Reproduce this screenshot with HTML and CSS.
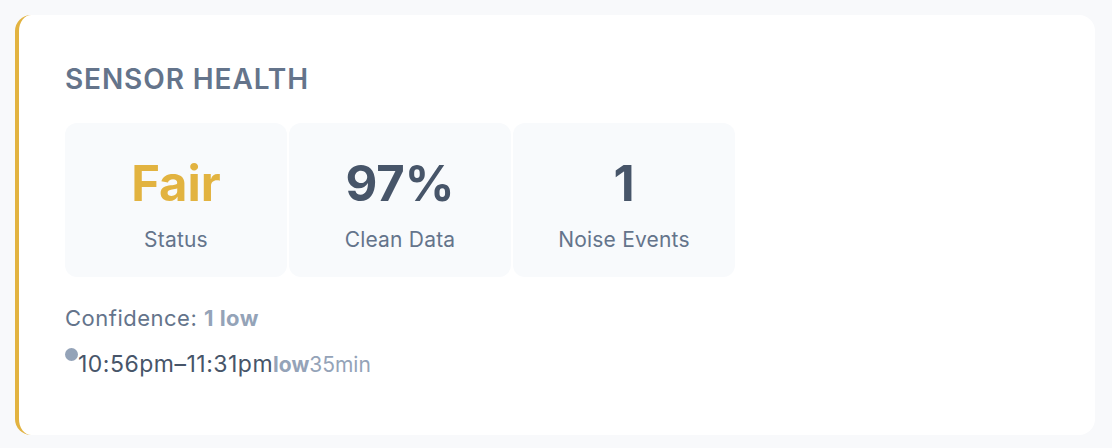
FILE: index.html
```html
<!DOCTYPE html>
<html>
<head>
<meta charset="utf-8">
<link rel="stylesheet" href="styles.css">
</head>
<body>
<div class="card">
  <h2 class="title">SENSOR HEALTH</h2>
  <div class="stats">
    <div class="stat"><div class="value fair">Fair</div><div class="label">Status</div></div>
    <div class="stat"><div class="value">97%</div><div class="label">Clean Data</div></div>
    <div class="stat"><div class="value">1</div><div class="label">Noise Events</div></div>
  </div>
  <div class="confidence">Confidence: <strong>1 low</strong></div>
  <div class="event">
    <span class="dot"></span>
    <span class="time">10:56pm–11:31pm</span><span class="level">low</span><span class="dur">35min</span>
  </div>
</div>
</body>
</html>
```
FILE: styles.css
```css
html, body { margin: 0; padding: 0; }
body {
  background: #f8f9fb;
  font-family: Inter, "Noto Sans", "Liberation Sans", sans-serif;
  padding: 15px 17px 13px 15px;
}
.card {
  background: #ffffff;
  border-left: 4px solid #e2b340;
  border-radius: 16px;
  height: 420px;
  box-sizing: border-box;
  padding: 47px 46px 0 46px;
}
.title {
  margin: 0;
  font-size: 28px;
  font-weight: 600;
  letter-spacing: 0.9px;
  color: #64748b;
  line-height: 34px;
}
.stats {
  display: flex;
  gap: 2px;
  margin-top: 27px;
}
.stat {
  width: 222px;
  height: 154px;
  background: #f8fafc;
  border-radius: 12px;
  display: flex;
  flex-direction: column;
  align-items: center;
  padding-top: 32px;
  box-sizing: border-box;
}
.value {
  font-size: 49px;
  font-weight: 700;
  line-height: 58px;
  color: #475569;
}
.value.fair { color: #e2b340; }
.label {
  margin-top: 14px;
  font-size: 21px;
  letter-spacing: 0.2px;
  color: #64748b;
  line-height: 26px;
}
.confidence {
  margin-top: 27px;
  font-size: 22px;
  letter-spacing: 0.5px;
  color: #64748b;
  line-height: 28px;
}
.confidence strong { color: #94a3b8; font-weight: 700; }
.event {
  margin-top: 15px;
  display: flex;
  align-items: flex-start;
  line-height: 34px;
}
.dot {
  width: 13px;
  height: 13px;
  border-radius: 50%;
  background: #94a3b8;
  margin-top: 1px;
  flex-shrink: 0;
}
.time { font-size: 23px; letter-spacing: 0.5px; color: #475569; }
.level { font-size: 21px; color: #94a3b8; font-weight: 700; padding-top: 1px; }
.dur { font-size: 21px; color: #94a3b8; padding-top: 1px; }
```
